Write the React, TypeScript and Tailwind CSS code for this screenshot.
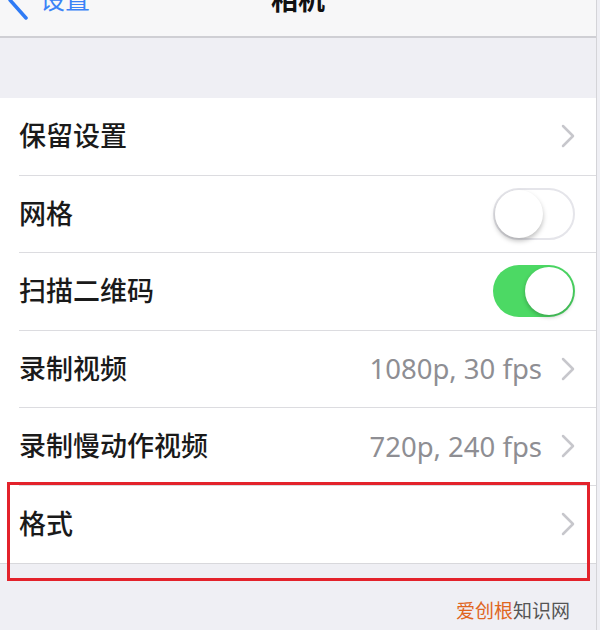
import React from "react";

const font = { fontFamily: '"Noto Sans", "Noto Sans CJK SC", sans-serif' };

const Chevron = () => (
  <svg width="14" height="24" viewBox="0 0 14 24" className="shrink-0">
    <path d="M2 2 L12 12 L2 22" fill="none" stroke="#c7c7cc" strokeWidth="2.5" strokeLinecap="round" strokeLinejoin="round" />
  </svg>
);

const Toggle = ({ on }: { on: boolean }) =>
  on ? (
    <div className="w-[82px] h-[52px] rounded-full bg-[#4cd964] relative shrink-0">
      <div className="absolute right-[2px] top-[2px] w-[48px] h-[48px] rounded-full bg-white shadow-[0_2px_4px_rgba(0,0,0,0.25)]" />
    </div>
  ) : (
    <div className="w-[82px] h-[52px] rounded-full bg-white border-2 border-[#e5e5ea] relative shrink-0">
      <div className="absolute left-0 top-0 w-[48px] h-[48px] rounded-full bg-white shadow-[0_3px_5px_rgba(0,0,0,0.25)]" />
    </div>
  );

interface RowProps {
  label: string;
  value?: string;
  toggle?: boolean;
  last?: boolean;
}

const Row: React.FC<RowProps> = ({ label, value, toggle, last }) => (
  <div className="pl-[19px] h-[77.5px]">
    <div
      className={`flex items-center h-full pr-[21px] ${last ? "" : "border-b border-[#dcdce0]"}`}
    >
      <span className="text-[27px] font-medium text-[#1a1a1a] flex-1">{label}</span>
      {value && <span className="text-[27.5px] text-[#8e8e93] mr-[19px]">{value}</span>}
      {toggle === undefined ? <Chevron /> : <Toggle on={toggle} />}
    </div>
  </div>
);

export default function App() {
  return (
    <div className="w-[600px] h-[630px] bg-[#efeff4] overflow-hidden relative" style={font}>
      <div className="w-[597px] h-full border-r border-[#d4d4d8] bg-[#efeff4]">
        <div className="h-[38px] bg-[#f7f7f8] border-b-2 border-[#cfcfd4] overflow-hidden">
          <div className="h-[44px] -mt-[22px] relative flex items-center justify-center">
            <div className="absolute left-[6px] top-[0px] flex items-center">
              <svg width="26" height="44" viewBox="0 0 26 44">
                <path d="M20 4 L4 22 L20 40" fill="none" stroke="#2f7bf5" strokeWidth="3.5" strokeLinecap="round" strokeLinejoin="round" />
              </svg>
              <span className="text-[25px] text-[#3a82f7] ml-[8px]">设置</span>
            </div>
            <span className="text-[27px] font-semibold text-[#111]">相机</span>
          </div>
        </div>
        <div className="h-[60px]" />
        <div className="bg-white border-b border-[#d8d8dc]">
          <Row label="保留设置" />
          <Row label="网格" toggle={false} />
          <Row label="扫描二维码" toggle={true} />
          <Row label="录制视频" value="1080p, 30 fps" />
          <Row label="录制慢动作视频" value="720p, 240 fps" />
          <Row label="格式" last />
        </div>
        <div className="flex justify-end pr-[26px] pt-[38px] text-[19px] leading-none">
          <span className="text-[#e0661f]">爱创根</span>
          <span className="text-[#555]">知识网</span>
        </div>
      </div>
      <div className="absolute left-[7px] top-[482px] w-[583px] h-[99px] border-[3px] border-[#e3222b]" />
    </div>
  );
}
